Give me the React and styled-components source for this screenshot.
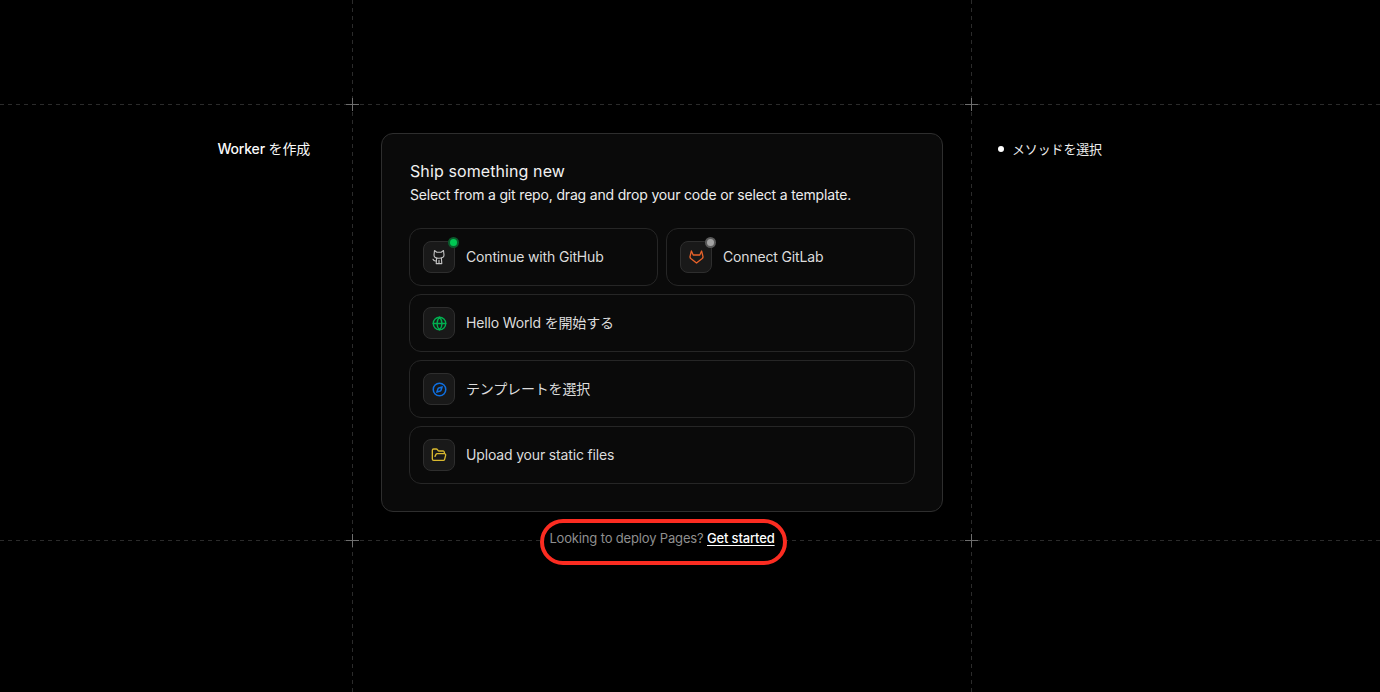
import React from 'react'
import styled, { createGlobalStyle } from 'styled-components'
import { Globe, Compass, FolderOpen } from 'lucide-react'

const GlobalStyle = createGlobalStyle`
  html, body {
    margin: 0;
    height: 100%;
    background: #000;
    font-family: Inter, "Noto Sans CJK JP", sans-serif;
    color: #fff;
    overflow: hidden;
  }
`

function GithubCat() {
  return (
    <svg width="14" height="16" viewBox="0 0 14 16" fill="none" stroke="#c4c4c4" strokeWidth="1.1" strokeLinejoin="round" strokeLinecap="round">
      <path d="M2.5 1.5 L4.8 3.2 H9.2 L11.5 1.5 L12 6 C12 8.2 10.4 9.2 7 9.2 C3.6 9.2 2 8.2 2 6 Z" />
      <path d="M4.6 9 L4.2 14.6 H9.8 L9.4 9 M7 11.4 V14.6" />
      <path d="M4.4 11.8 C2.8 12.2 1.6 11.6 1 10.2" />
    </svg>
  )
}

function GitlabFox() {
  return (
    <svg width="15" height="14" viewBox="0 0 15 14" fill="none" stroke="#e8622a" strokeWidth="1.3" strokeLinejoin="round">
      <path d="M2.4 1 L4.2 5 H10.8 L12.6 1 L14 6.6 C14.1 7.4 13.8 8 13.2 8.5 L7.5 13 L1.8 8.5 C1.2 8 0.9 7.4 1 6.6 Z" />
    </svg>
  )
}

function App() {
  return (
    <>
      <GlobalStyle />
      <Page>
        <HLine $top={104} />
        <HLine $top={540} />
        <VLine $left={352} />
        <VLine $left={971} />
        <Cross $left={352} $top={104} />
        <Cross $left={971} $top={104} />
        <Cross $left={352} $top={540} />
        <Cross $left={971} $top={540} />

        <Layout>
          <SideTitle><SideName>Worker</SideName> を作成</SideTitle>
          <Center>
            <Card>
              <CardTitle>Ship something new</CardTitle>
              <CardText>Select from a git repo, drag and drop your code or select a template.</CardText>
              <Options>
                <OptionRow>
                  <Option>
                    <IconBox>
                      <GithubCat />
                      <StatusDot $color="#00c853" $ring="#0b5c2d" />
                    </IconBox>
                    Continue with GitHub
                  </Option>
                  <Option>
                    <IconBox>
                      <GitlabFox />
                      <StatusDot $color="#a3a3a3" $ring="#5a5a5a" />
                    </IconBox>
                    Connect GitLab
                  </Option>
                </OptionRow>
                <Option>
                  <IconBox><Globe size={15} color="#00b050" strokeWidth={2.2} /></IconBox>
                  Hello World を開始する
                </Option>
                <Option>
                  <IconBox><Compass size={15} color="#0f6fe0" strokeWidth={2.4} /></IconBox>
                  テンプレートを選択
                </Option>
                <Option>
                  <IconBox><FolderOpen size={16} color="#d9b92f" strokeWidth={2} /></IconBox>
                  Upload your static files
                </Option>
              </Options>
            </Card>
            <Footer>
              <RedOval />
              Looking to deploy Pages? <FooterLink href="#">Get started</FooterLink>
            </Footer>
          </Center>
          <Step>メソッドを選択</Step>
        </Layout>
      </Page>
    </>
  )
}

const Page = styled.div`
  position: relative;
  width: 100%;
  height: 692px;
  overflow: hidden;
  background: #000;
`

const HLine = styled.div`
  position: absolute;
  left: 0;
  right: 0;
  top: ${p => p.$top}px;
  height: 1px;
  background: repeating-linear-gradient(90deg, #2b2b2b 0 4px, transparent 4px 8px);
`

const VLine = styled.div`
  position: absolute;
  top: 0;
  bottom: 0;
  left: ${p => p.$left}px;
  width: 1px;
  background: repeating-linear-gradient(180deg, #2b2b2b 0 4px, transparent 4px 8px);
`

const Cross = styled.div`
  position: absolute;
  left: ${p => p.$left - 6}px;
  top: ${p => p.$top - 6}px;
  width: 13px;
  height: 13px;
  background:
    linear-gradient(#6e6e6e, #6e6e6e) center / 13px 1px no-repeat,
    linear-gradient(#6e6e6e, #6e6e6e) center / 1px 13px no-repeat;
`

const Layout = styled.div`
  position: relative;
  display: flex;
  align-items: flex-start;
  padding-top: 133px;
`

const SideTitle = styled.div`
  width: 310px;
  margin-right: 71px;
  padding-top: 6px;
  text-align: right;
  font-size: 14px;
  line-height: 20px;
  font-weight: 400;
  letter-spacing: -0.2px;
  color: #fafafa;
`

const SideName = styled.span`
  font-weight: 500;
`

const Center = styled.div`
  width: 562px;
  display: flex;
  flex-direction: column;
  align-items: center;
`

const Card = styled.div`
  box-sizing: border-box;
  width: 100%;
  height: 379px;
  padding: 27px 27px 27px 27px;
  background: #0a0a0a;
  border: 1px solid #2e2e2e;
  border-radius: 12px;
`

const CardTitle = styled.h2`
  margin: 0 0 0 1px;
  font-size: 16px;
  line-height: 20px;
  font-weight: 400;
  letter-spacing: 0.1px;
  color: #f2f2f2;
`

const CardText = styled.p`
  margin: 4px 0 0 1px;
  font-size: 14px;
  line-height: 20px;
  font-weight: 400;
  letter-spacing: -0.17px;
  color: #ededed;
`

const Options = styled.div`
  margin-top: 23px;
  display: flex;
  flex-direction: column;
  gap: 8px;
`

const OptionRow = styled.div`
  display: grid;
  grid-template-columns: 249px 249px;
  gap: 8px;
`

const Option = styled.div`
  box-sizing: border-box;
  height: 58px;
  display: flex;
  align-items: center;
  gap: 11px;
  padding: 0 13px;
  background: #0a0a0a;
  border: 1px solid #262626;
  border-radius: 12px;
  font-size: 14px;
  line-height: 20px;
  letter-spacing: -0.16px;
  color: #dcdcdc;
`

const IconBox = styled.div`
  position: relative;
  box-sizing: border-box;
  width: 32px;
  height: 32px;
  flex: none;
  display: flex;
  align-items: center;
  justify-content: center;
  background: #191919;
  border: 1px solid #2e2e2e;
  border-radius: 8px;
`

const StatusDot = styled.span`
  position: absolute;
  top: -3px;
  right: -3px;
  box-sizing: border-box;
  width: 7px;
  height: 7px;
  border-radius: 50%;
  background: ${p => p.$color};
  box-shadow: 0 0 0 2px ${p => p.$ring};
`

const Footer = styled.div`
  position: relative;
  isolation: isolate;
  margin-top: 16px;
  font-size: 13px;
  line-height: 20px;
  letter-spacing: -0.16px;
  color: #8f8f8f;
  white-space: pre-wrap;
`

const FooterLink = styled.a`
  color: #fff;
  font-weight: 500;
  text-decoration: underline;
  text-underline-offset: 2px;
`

const RedOval = styled.span`
  position: absolute;
  z-index: -1;
  left: -9px;
  right: -12px;
  top: -9px;
  bottom: -17px;
  background: #000;
  border: 4.5px solid #fb2c21;
  border-radius: 24px;
  pointer-events: none;
`

const Step = styled.div`
  position: relative;
  margin-left: 69px;
  padding-top: 6px;
  font-size: 13px;
  line-height: 20px;
  letter-spacing: -0.15px;
  color: #ededed;

  &::before {
    content: '';
    position: absolute;
    left: -14px;
    top: 13px;
    width: 6px;
    height: 6px;
    border-radius: 50%;
    background: #fff;
  }
`

export default App
